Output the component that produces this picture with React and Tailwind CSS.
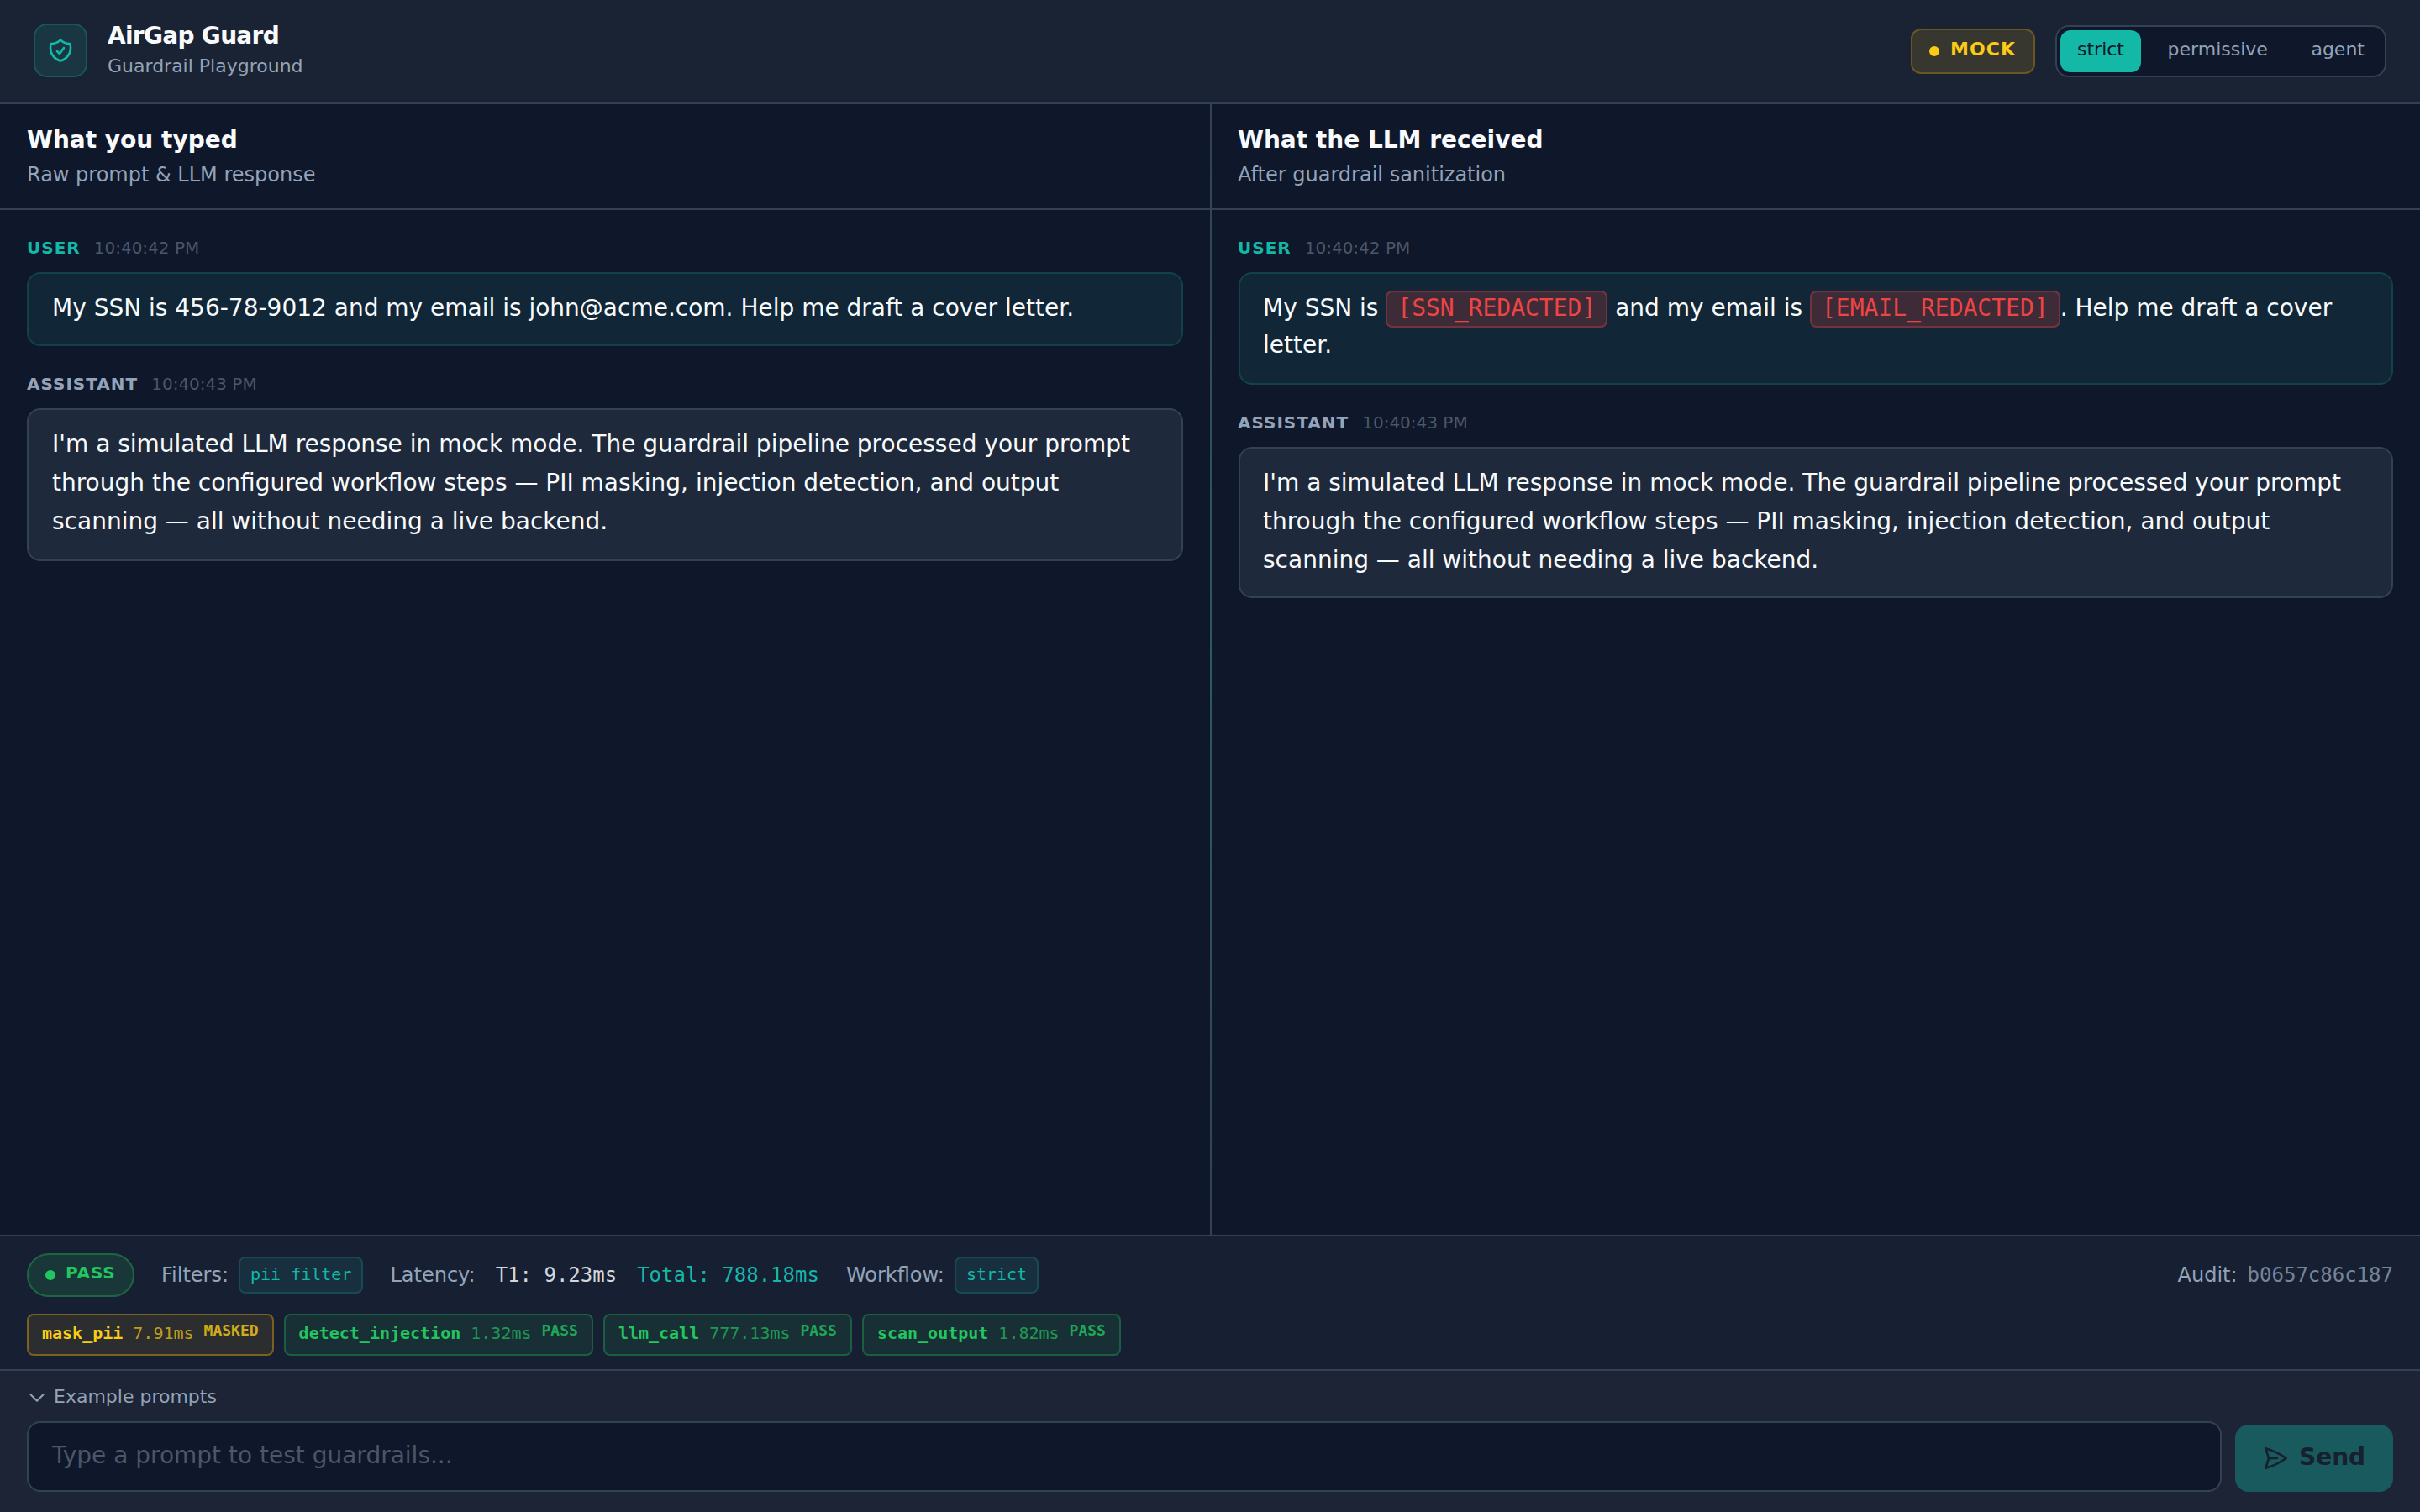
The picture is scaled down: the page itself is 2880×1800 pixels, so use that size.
import React from 'react';

const ASSISTANT_REPLY =
  "I'm a simulated LLM response in mock mode. The guardrail pipeline processed your prompt through the configured workflow steps — PII masking, injection detection, and output scanning — all without needing a live backend.";

const steps = [
  { name: 'mask_pii', time: '7.91ms', status: 'MASKED', tone: 'border-[#7a611d] bg-[#2b2d2f] text-[#facc15]' },
  { name: 'detect_injection', time: '1.32ms', status: 'PASS', tone: 'border-[#1a5f41] bg-[#182f36] text-[#22c55e]' },
  { name: 'llm_call', time: '777.13ms', status: 'PASS', tone: 'border-[#1a5f41] bg-[#182f36] text-[#22c55e]' },
  { name: 'scan_output', time: '1.82ms', status: 'PASS', tone: 'border-[#1a5f41] bg-[#182f36] text-[#22c55e]' }
];

const ShieldIcon = () => (
  <svg className="w-8 h-8 text-[#14b8a6]" viewBox="0 0 24 24" fill="none" stroke="currentColor" strokeWidth="2" strokeLinecap="round" strokeLinejoin="round">
    <path d="M9 12.75 11.25 15 15 9.75m-3-7.036A11.959 11.959 0 0 1 3.598 6 11.99 11.99 0 0 0 3 9.749c0 5.592 3.824 10.29 9 11.623 5.176-1.332 9-6.03 9-11.622 0-1.31-.21-2.571-.598-3.751h-.152c-3.196 0-6.1-1.248-8.25-3.285Z" />
  </svg>
);

const ChevronIcon = () => (
  <svg className="w-6 h-6" viewBox="0 0 24 24" fill="none" stroke="currentColor" strokeWidth="2" strokeLinecap="round" strokeLinejoin="round">
    <path d="m19.5 8.25-7.5 7.5-7.5-7.5" />
  </svg>
);

const SendIcon = () => (
  <svg className="w-8 h-8" viewBox="0 0 24 24" fill="none" stroke="currentColor" strokeWidth="2" strokeLinecap="round" strokeLinejoin="round">
    <path d="M6 12 3.269 3.125A59.769 59.769 0 0 1 21.485 12 59.768 59.768 0 0 1 3.27 20.875L5.999 12Zm0 0h7.5" />
  </svg>
);

const PanelHeader = ({ title, subtitle }) => (
  <div className="h-[126px] px-8 pt-6 border-b-2 border-[#334155]">
    <h2 className="text-[28px] leading-[37px] font-bold text-[#f8fafc]">{title}</h2>
    <p className="mt-[7px] text-[24px] leading-8 text-[#94a3b8]">{subtitle}</p>
  </div>
);

const MessageMeta = ({ role, time, color }) => (
  <div className="flex items-center gap-4 mb-4 text-[20px] leading-[26px]">
    <span className={`font-bold tracking-[0.05em] ${color}`}>{role}</span>
    <span className="text-[#4b5669]">{time}</span>
  </div>
);

const Redacted = ({ children }) => (
  <span className="font-['DejaVu_Sans_Mono',monospace] pt-[2px] pb-[5px] px-3 rounded-lg border-2 border-[#74333c] bg-[#3e2b38] text-[#ef4444]">
    {children}
  </span>
);

const Tag = ({ children }) => (
  <span className="h-11 px-3 pt-1 rounded-lg border-2 border-[#164b55] bg-[#172f3e] text-[#14b8a6] text-[20px] leading-[30px] font-['DejaVu_Sans_Mono',monospace]">
    {children}
  </span>
);

const App = () => {
  return (
    <div className="w-[2880px] h-[1800px] flex flex-col overflow-hidden bg-[#0f172a] font-['DejaVu_Sans',sans-serif]">
      {/* Header */}
      <header className="h-[124px] shrink-0 flex items-start justify-between px-10 pt-7 border-b-2 border-[#334155] bg-[#1a2333]">
        <div className="flex items-start gap-6">
          <div className="w-16 h-16 rounded-2xl border-2 border-[#18575d] bg-[#193642] flex items-center justify-center">
            <ShieldIcon />
          </div>
          <div>
            <h1 className="text-[28px] leading-[29px] font-bold tracking-tight text-[#f8fafc]">AirGap Guard</h1>
            <p className="mt-[6px] text-[22px] leading-[31px] text-[#94a3b8]">Guardrail Playground</p>
          </div>
        </div>

        <div className="flex items-center gap-6 pt-[2px]">
          <div className="w-[148px] h-[54px] pl-5 flex items-center gap-[13px] rounded-xl border-2 border-[#6c561f] bg-[#38372f] text-[#facc15]">
            <span className="w-3 h-3 rounded-full bg-[#facc15]" />
            <span className="pb-[5px] text-[22px] leading-8 font-bold tracking-[0.05em]">MOCK</span>
          </div>
          <div className="w-[394px] h-[62px] p-1 flex justify-between rounded-2xl border-2 border-[#334155] bg-[#0f172a] text-[22px] leading-[45px] text-[#94a3b8]">
            <button className="px-5 pb-[5px] rounded-xl bg-[#14b8a6] text-[#0f172a]">strict</button>
            <button className="px-5 pb-[5px]">permissive</button>
            <button className="px-5 pb-[5px]">agent</button>
          </div>
        </div>
      </header>

      {/* Split view */}
      <main className="flex-1 min-h-0 flex">
        <section className="w-[1440px]">
          <PanelHeader title="What you typed" subtitle="Raw prompt & LLM response" />
          <div className="px-8 pt-8">
            <MessageMeta role="USER" time="10:40:42 PM" color="text-[#14b8a6]" />
            <div className="px-7 pt-[18px] pb-5 rounded-2xl border-2 border-[#114249] bg-[#112737] text-[28px] leading-[46px] text-[#f8fafc]">
              My SSN is 456-78-9012 and my email is john@acme.com. Help me draft a cover letter.
            </div>
            <div className="h-8" />
            <MessageMeta role="ASSISTANT" time="10:40:43 PM" color="text-[#94a3b8]" />
            <div className="px-7 pt-[18px] pb-[22px] rounded-2xl border-2 border-[#334155] bg-[#1e293b] text-[28px] leading-[46px] text-[#f8fafc]">
              {ASSISTANT_REPLY}
            </div>
          </div>
        </section>

        <div className="w-[2px] bg-gradient-to-b from-[#334155] via-[#2b5a66] to-[#334155]" />

        <section className="flex-1">
          <div className="-indent-px">
            <PanelHeader title="What the LLM received" subtitle="After guardrail sanitization" />
          </div>
          <div className="px-8 pt-8">
            <div className="-ml-px">
              <MessageMeta role="USER" time="10:40:42 PM" color="text-[#14b8a6]" />
            </div>
            <div className="pl-[27px] pr-[29px] pt-[19px] pb-[23px] rounded-2xl border-2 border-[#114249] bg-[#112737] text-[28px] leading-[44px] text-[#f8fafc]">
              My SSN is <Redacted>[SSN_REDACTED]</Redacted> and my email is <Redacted>[EMAIL_REDACTED]</Redacted>. Help me draft a cover letter.
            </div>
            <div className="h-8" />
            <div className="-ml-px">
              <MessageMeta role="ASSISTANT" time="10:40:43 PM" color="text-[#94a3b8]" />
            </div>
            <div className="pl-[27px] pr-[29px] pt-[18px] pb-5 rounded-2xl border-2 border-[#334155] bg-[#1e293b] text-[28px] leading-[46px] text-[#f8fafc]">
              {ASSISTANT_REPLY}
            </div>
          </div>
        </section>
      </main>

      {/* Run status */}
      <div className="h-[160px] shrink-0 px-8 pt-5 border-t-2 border-[#334155] bg-[#162032]">
        <div className="flex items-center gap-8 text-[24px] leading-8 text-[#94a3b8]">
          <div className="w-32 h-[52px] pl-5 flex items-center gap-3 rounded-full border-2 border-[#1c6644] bg-[#193739] text-[#22c55e]">
            <span className="w-3 h-3 rounded-full bg-[#22c55e]" />
            <span className="pb-[6px] text-[20px] leading-7 font-bold tracking-[0.04em]">PASS</span>
          </div>
          <div className="flex items-center gap-3">
            <span>Filters:</span>
            <Tag>pii_filter</Tag>
          </div>
          <div className="flex items-center gap-6">
            <span>Latency:</span>
            <span className="font-['DejaVu_Sans_Mono',monospace] text-[#d3d7dd]">T1: 9.23ms</span>
            <span className="font-['DejaVu_Sans_Mono',monospace] text-[#14b8a6]">Total: 788.18ms</span>
          </div>
          <div className="flex items-center gap-3">
            <span>Workflow:</span>
            <Tag>strict</Tag>
          </div>
          <div className="ml-auto flex items-center gap-3">
            <span>Audit:</span>
            <span className="font-['DejaVu_Sans_Mono',monospace] text-[#768499]">b0657c86c187</span>
          </div>
        </div>
        <div className="mt-5 flex gap-3">
          {steps.map((step) => (
            <div
              key={step.name}
              className={`h-[50px] px-4 flex items-start gap-3 rounded-lg border-2 font-['DejaVu_Sans_Mono',monospace] text-[20px] ${step.tone}`}
            >
              <span className="pt-[6px] leading-[30px] font-bold">{step.name}</span>
              <span className="pt-[6px] leading-[30px] opacity-70">{step.time}</span>
              <span className="pt-1 text-[18px] leading-[27px] font-bold opacity-80">{step.status}</span>
            </div>
          ))}
        </div>
      </div>

      {/* Prompt input */}
      <footer className="h-[170px] shrink-0 px-8 pt-4 border-t-2 border-[#334155] bg-[#1c2436]">
        <button className="h-[30px] flex items-start gap-2 text-[22px] leading-[30px] text-[#94a3b8]">
          <span className="pt-1"><ChevronIcon /></span>
          Example prompts
        </button>
        <div className="mt-[14px] flex items-end gap-4">
          <input
            className="flex-1 h-[84px] px-7 pb-[3px] rounded-2xl border-2 border-[#334155] bg-[#0f172a] text-[28px] placeholder:text-[#4b5669] outline-none"
            placeholder="Type a prompt to test guardrails..."
          />
          <button className="w-[188px] h-20 px-8 flex items-center gap-3 rounded-2xl bg-[#195a5f] text-[#17202f] text-[28px] font-bold">
            <SendIcon />
            <span className="pb-[3px]">Send</span>
          </button>
        </div>
      </footer>
    </div>
  );
};

export default App;
